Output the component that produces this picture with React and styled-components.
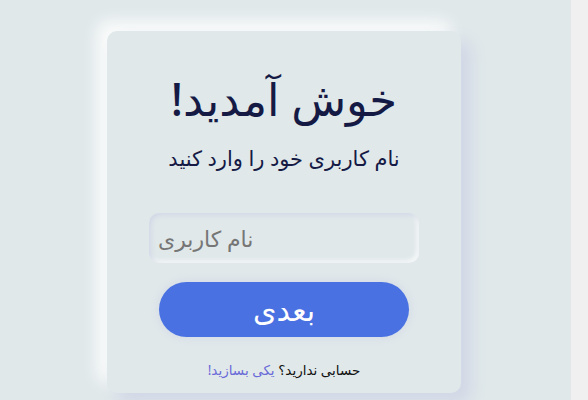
import React from 'react';
import styled, { createGlobalStyle } from 'styled-components';

const GlobalStyle = createGlobalStyle`
  html, body {
    margin: 0;
    padding: 0;
  }
  body {
    font-family: 'Noto Sans', 'DejaVu Sans', sans-serif;
    background: #f0f0f0;
  }
`;

const Screen = styled.div`
  display: flex;
  height: 400px;
  overflow: hidden;
`;

const Page = styled.main`
  flex: 1;
  display: flex;
  justify-content: center;
  align-items: flex-start;
  padding: 31px 3px 0 0;
  background: #e0e8ea;
`;

// light strip down the right edge
const Gutter = styled.div`
  width: 17px;
  background: #f0f0f0;
`;

const Card = styled.section`
  width: 354px;
  height: 362px;
  box-sizing: border-box;
  border-radius: 10px;
  background: #e0e8ea;
  box-shadow: 10px 10px 16px #d1d7e6, -10px -10px 16px #fbfcfc;
  display: flex;
  flex-direction: column;
  align-items: center;
  direction: rtl;
  padding-top: 36px;
`;

const Title = styled.h1`
  margin: 0;
  font-size: 45px;
  font-weight: 500;
  line-height: 64px;
  color: #151a45;
`;

const Subtitle = styled.h2`
  margin: 12px 0 0;
  font-size: 21px;
  font-weight: 500;
  line-height: 30px;
  color: #151a45;
`;

const Input = styled.input`
  margin-top: 40px;
  width: 270px;
  height: 50px;
  box-sizing: border-box;
  border: none;
  outline: none;
  border-radius: 10px;
  background: #e0e8ea;
  box-shadow: inset 2px 2px 5px #d1d7e6, inset -2px -2px 5px #fbfcfc;
  direction: ltr;
  text-align: left;
  padding: 0 9px;
  font-family: inherit;
  font-size: 22px;
  color: #333;
  &::placeholder {
    color: #767676;
  }
`;

const Button = styled.button`
  margin-top: 19px;
  width: 250px;
  height: 55px;
  border: none;
  border-radius: 28px;
  background: #4a71e1;
  color: #fff;
  font-family: inherit;
  font-size: 30px;
  box-shadow: 0 0 10px #d1d7e6;
  cursor: pointer;
`;

const Footer = styled.p`
  margin: 24px 0 0;
  font-size: 13.5px;
  color: #111;
`;

const Link = styled.a`
  color: #6a6ad8;
  text-decoration: none;
`;

export default function App() {
  return (
    <>
      <GlobalStyle />
      <Screen>
        <Page>
          <Card>
            <Title>خوش آمدید!</Title>
            <Subtitle>نام کاربری خود را وارد کنید</Subtitle>
            <Input placeholder="نام کاربری" />
            <Button>بعدی</Button>
            <Footer>
              حسابی ندارید؟ <Link href="#">یکی بسازید!</Link>
            </Footer>
          </Card>
        </Page>
        <Gutter />
      </Screen>
    </>
  );
}
